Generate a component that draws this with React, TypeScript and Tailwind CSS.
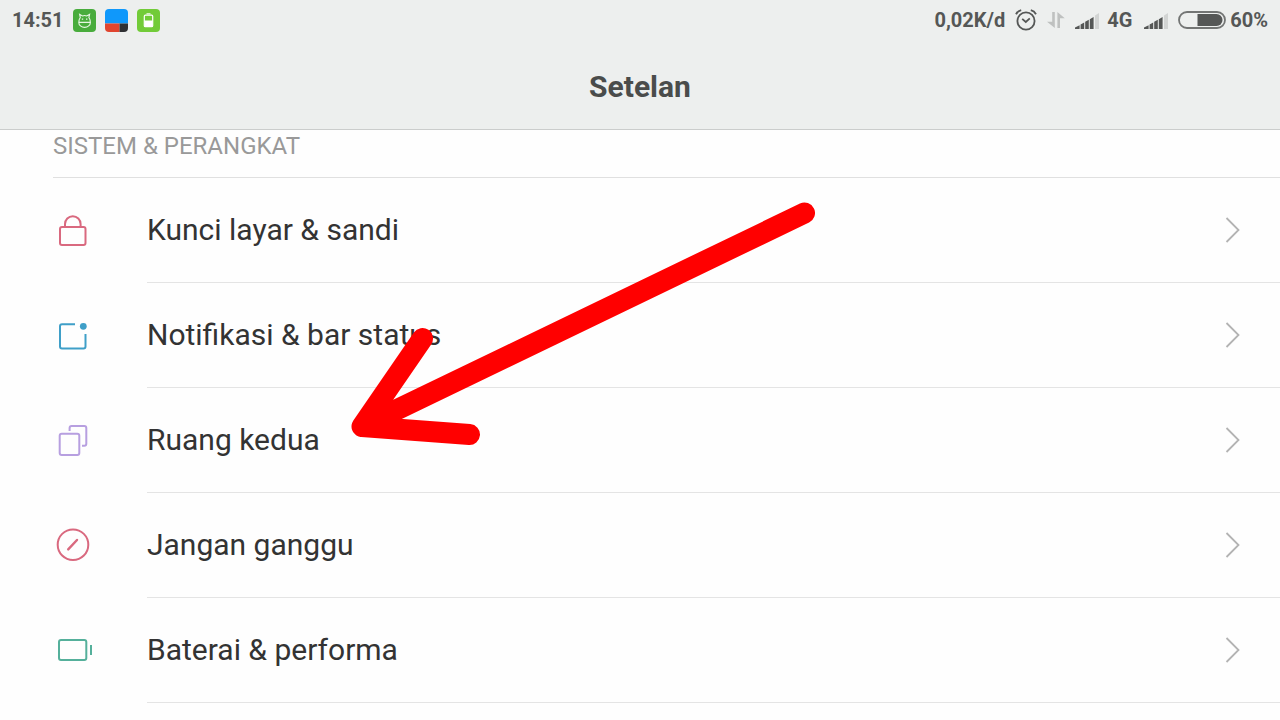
import type { ReactNode } from "react";

const LockIcon = () => (
  <svg viewBox="0 0 40 40" className="w-10 h-10" fill="none" stroke="#d9697f" strokeWidth="2">
    <rect x="7" y="17" width="25.5" height="18" rx="2" />
    <path d="M12 17v-3a7.8 7.8 0 0 1 15.6 0v3" />
  </svg>
);

const NotificationIcon = () => (
  <svg viewBox="0 0 40 40" className="w-10 h-10" fill="none" stroke="#3f9fc8" strokeWidth="2">
    <path d="M22 9.3H9a2 2 0 0 0-2 2v20.2a2 2 0 0 0 2 2h21.5a2 2 0 0 0 2-2V19" />
    <circle cx="30.3" cy="11.3" r="3.4" fill="#3f9fc8" stroke="none" />
  </svg>
);

const SecondSpaceIcon = () => (
  <svg viewBox="0 0 40 40" className="w-10 h-10" fill="none" stroke="#b79fe0" strokeWidth="2">
    <rect x="6.7" y="13.7" width="19.6" height="21.3" rx="2" />
    <path d="M16.6 11V8a2 2 0 0 1 2-2h12.7a2 2 0 0 1 2 2v15.8a2 2 0 0 1-2 2H29" />
  </svg>
);

const DoNotDisturbIcon = () => (
  <svg viewBox="0 0 40 40" className="w-10 h-10" fill="none" stroke="#d9697f" strokeWidth="2">
    <circle cx="20" cy="19.7" r="15.3" />
    <path d="M15.2 24.4l8.8-9.4" strokeWidth="2.4" strokeLinecap="round" />
  </svg>
);

const BatteryIcon = () => (
  <svg viewBox="0 0 40 40" className="w-10 h-10" fill="none" stroke="#55b09b" strokeWidth="2">
    <rect x="6" y="10" width="27.3" height="20" rx="2" />
    <path d="M38 15v10" />
  </svg>
);

const Chevron = () => (
  <svg viewBox="0 0 16 28" className="w-4 h-7 shrink-0" fill="none" stroke="#b3b3b3" strokeWidth="1.8">
    <path d="M2.5 2l12 12l-12 12" />
  </svg>
);

const Signal = () => (
  <svg viewBox="0 0 24 18" className="w-6 h-[18px]" fill="#555756">
    <path d="M0 18v-1.4l4.6-2.4V18zM5.6 18v-4.4l3.6-2V18zM10.2 18v-7.2l3.6-2V18zM14.8 18V8.2L18.6 6v12z" />
    <path d="M20 4.6L24 2v16h-4z" fill="#d2d4d3" />
  </svg>
);

const StatusBar = () => (
  <div className="h-10 px-3 flex items-center justify-between text-xl font-bold text-[#555756]">
    <div className="flex items-center gap-[9px]">
      <span>14:51</span>
      {/* running apps */}
      <svg viewBox="0 0 23 23" className="w-[23px] h-[23px]" fill="none">
        <rect width="23" height="23" rx="4" fill="#48ac3c" />
        <path
          d="M6 11.8a5.8 5.8 0 0 1 1.3-3.2L6.6 5.4l2.9 1.5a6 6 0 0 1 4.2 0l2.9-1.5-.7 3.2a5.8 5.8 0 0 1 1.3 3.2M5.8 13.4h11.6a5.8 5 0 0 1-11.6 0zM6 11.8v1.6M17.2 11.8v1.6"
          stroke="#e6f6e2"
          strokeWidth="1.1"
        />
        <path d="M8.8 10.2h1.4M13 10.2h1.4" stroke="#e6f6e2" strokeWidth="1.2" />
      </svg>
      <svg viewBox="0 0 23 23" className="w-[23px] h-[23px] rounded">
        <path d="M0 0h23v14.5H0z" fill="#0f98fb" />
        <path d="M0 14.5h14.5V23H0z" fill="#e0452f" />
        <path d="M14.5 14.5H23V23h-8.5z" fill="#2f3033" />
      </svg>
      <svg viewBox="0 0 23 23" className="w-[23px] h-[23px]" fill="none">
        <rect width="23" height="23" rx="4" fill="#72cb38" />
        <rect x="7.3" y="6.2" width="8.4" height="11.5" rx="1" stroke="#fff" strokeWidth="1.2" />
        <path d="M9.5 4.8h4M8 12h7v5H8z" fill="#fff" stroke="#fff" />
      </svg>
    </div>

    <div className="flex items-center">
      <span>0,02K/d</span>
      <svg viewBox="0 0 22 22" className="w-[22px] h-[22px] ml-2.5" fill="none" stroke="#555756" strokeWidth="1.8">
        <circle cx="11" cy="12" r="8.6" />
        <path d="M7.2 9.8l3.6 3.2 4-3.6" />
        <path d="M1 5.2a8 8 0 0 1 5.2-4M21 5.2a8 8 0 0 0-5.2-4" />
      </svg>
      <svg viewBox="0 0 18 18" className="w-[18px] h-[18px] mx-2.5" fill="#bfc1c0">
        <path d="M5.2 1h2.6v16L0 10.8h5.2zM10.4 17V1l7.4 6.2H13V17z" />
      </svg>
      <Signal />
      <span className="ml-2 mr-3">4G</span>
      <Signal />
      <svg viewBox="0 0 48 18" className="w-12 h-[18px] ml-2.5 mr-1" fill="none">
        <rect x="1" y="1" width="46" height="16" rx="8" stroke="#737574" strokeWidth="1.8" />
        <path d="M19.5 3h19a6 6 0 0 1 0 12h-19z" fill="#555756" />
      </svg>
      <span>60%</span>
    </div>
  </div>
);

const items: { label: string; icon: ReactNode }[] = [
  { label: "Kunci layar & sandi", icon: <LockIcon /> },
  { label: "Notifikasi & bar status", icon: <NotificationIcon /> },
  { label: "Ruang kedua", icon: <SecondSpaceIcon /> },
  { label: "Jangan ganggu", icon: <DoNotDisturbIcon /> },
  { label: "Baterai & performa", icon: <BatteryIcon /> },
];

export default function App() {
  return (
    <div className="min-h-screen bg-[#fefefe] font-['Roboto',sans-serif]">
      {/* Header */}
      <header className="bg-[#edefee] border-b border-[#cbcdcc]">
        <StatusBar />
        <div className="h-[89px] pt-1 flex items-center justify-center">
          <h1 className="text-3xl font-bold text-[#4a4c4b]">Setelan</h1>
        </div>
      </header>

      {/* List */}
      <main className="relative pl-[53px]">
        <h2 className="h-12 pb-4 flex items-center border-b border-[#e0e0e0] text-2xl text-[#999999]">
          SISTEM &amp; PERANGKAT
        </h2>
        <ul>
          {items.map((item) => (
            <li key={item.label}>
              <button className="w-full h-[105px] flex text-left">
                <span className="w-[94px] h-full pb-0.5 flex items-center shrink-0">{item.icon}</span>
                <span className="flex-1 h-full pr-10 flex items-center justify-between border-b border-[#e4e4e4]">
                  <span className="text-3xl text-[#333333]">{item.label}</span>
                  <Chevron />
                </span>
              </button>
            </li>
          ))}
        </ul>

        {/* Arrow pointing at "Ruang kedua" */}
        <svg
          viewBox="0 0 464 244"
          className="absolute left-[351px] top-[72px] w-[464px] h-[244px] pointer-events-none"
          fill="none"
          stroke="#ff0000"
          strokeWidth="21"
          strokeLinecap="round"
          strokeLinejoin="round"
        >
          <path d="M453.5 11L11 224.5M71.5 136.5L11 224.5l107.5 8" />
        </svg>
      </main>
    </div>
  );
}
